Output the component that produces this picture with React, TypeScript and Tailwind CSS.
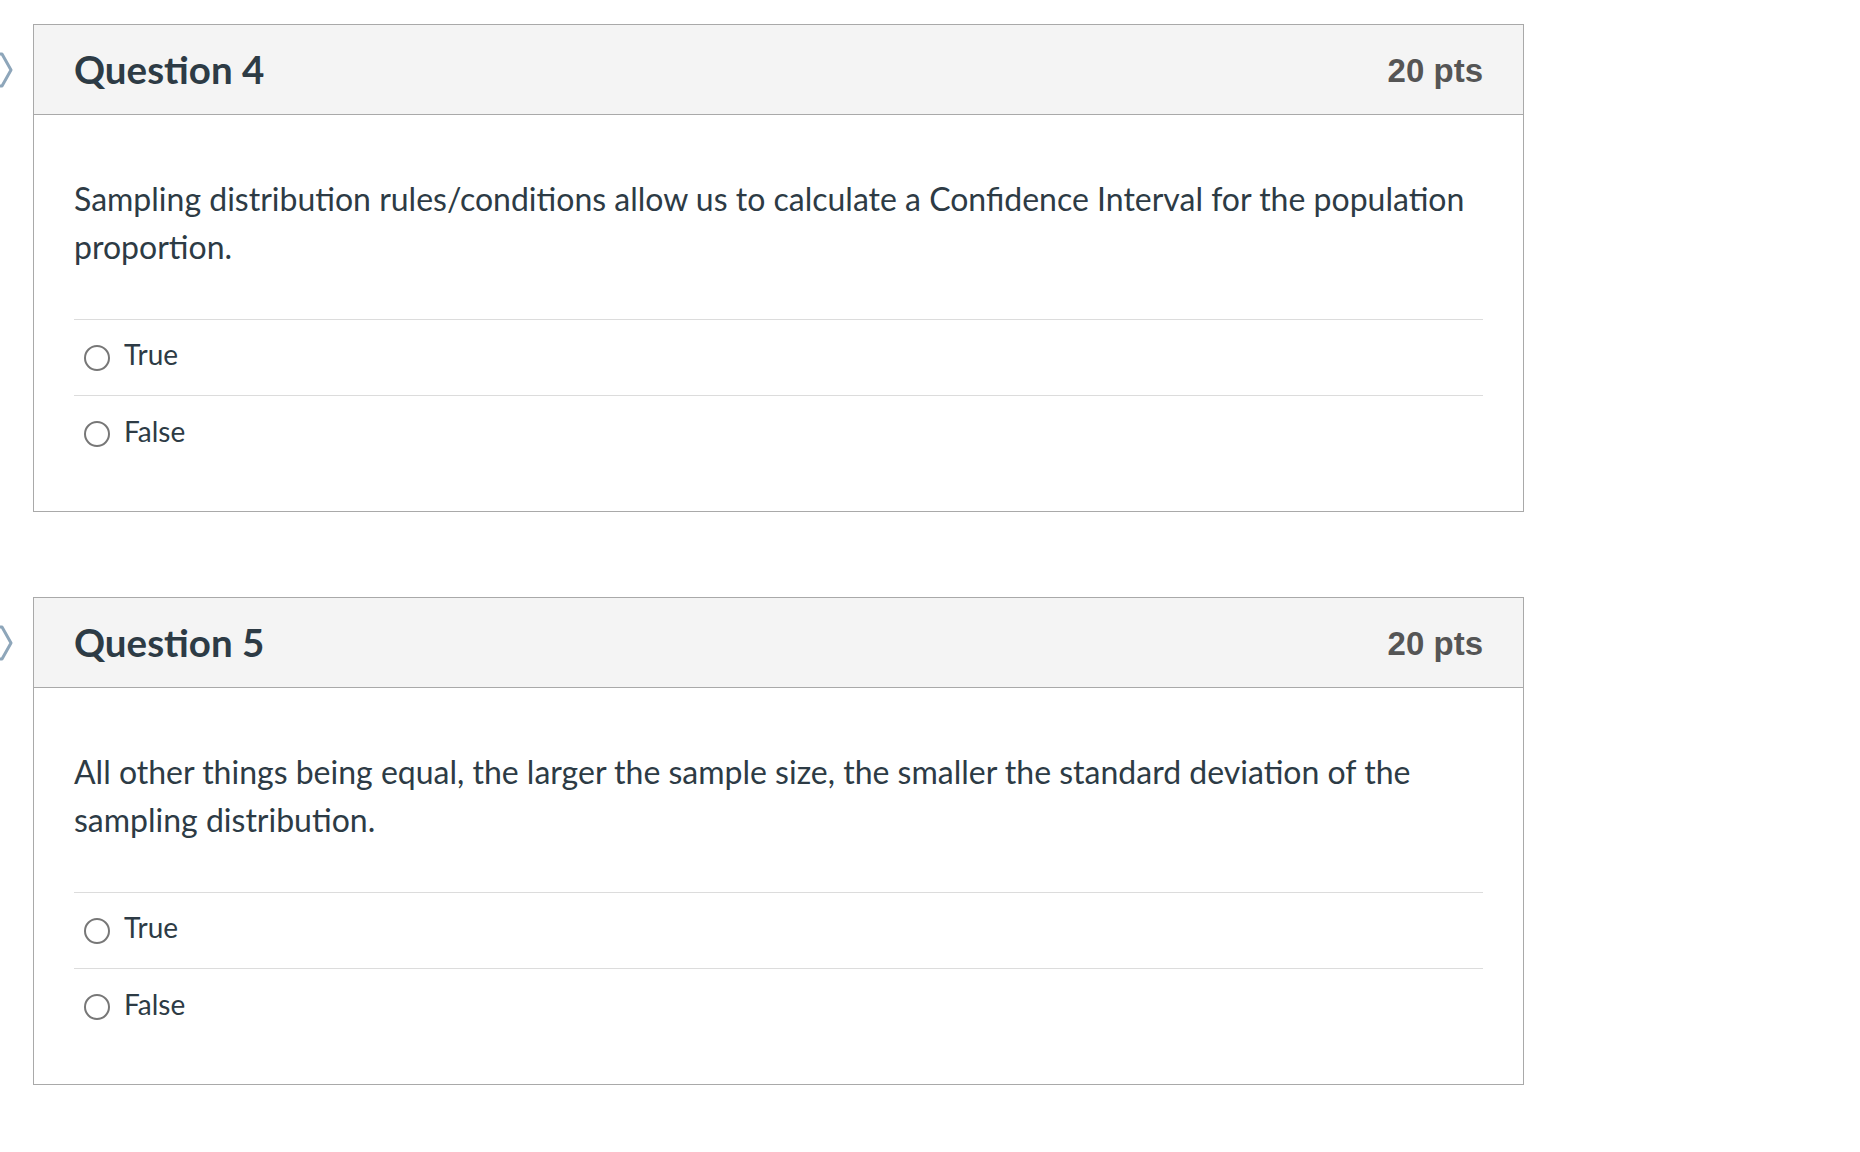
import React from 'react';

type Question = {
  number: number;
  points: number;
  text: string;
  answers: string[];
};

const questions: Question[] = [
  {
    number: 4,
    points: 20,
    text: 'Sampling distribution rules/conditions allow us to calculate a Confidence Interval for the population proportion.',
    answers: ['True', 'False'],
  },
  {
    number: 5,
    points: 20,
    text: 'All other things being equal, the larger the sample size, the smaller the standard deviation of the sampling distribution.',
    answers: ['True', 'False'],
  },
];

const FlagMark = () => (
  <svg width="16" height="36" viewBox="0 0 16 36" className="shrink-0">
    <path d="M-8 2 L4 2 L13 18 L4 34 L-8 34" fill="none" stroke="#8ea6ba" strokeWidth="3" strokeLinejoin="round" />
  </svg>
);

function QuestionCard({ q }: { q: Question }) {
  return (
    <div className="relative">
      {/* bookmark toggle, sits in the left gutter */}
      <div className="absolute -left-[35px] top-[28px]">
        <FlagMark />
      </div>
      <div className="border border-[#a9a9a9] bg-white">
        <div className="flex h-[90px] items-center justify-between border-b border-[#a9a9a9] bg-[#f4f4f4] px-[40px]">
          <h2 className="font-['Lato'] text-[38.5px] font-bold text-[#2d3b45]">Question {q.number}</h2>
          <span className="mt-[3px] font-['Liberation_Sans',Arial,sans-serif] text-[33px] font-bold text-[#555555]">
            {q.points} pts
          </span>
        </div>
        <div className="px-[40px] pt-[60px] pb-[39px]">
          <p className="font-['Lato'] text-[32px] leading-[48px] text-[#2d3b45] mb-[48px]">{q.text}</p>
          <div className="border-t border-[#dcdcdc]">
            {q.answers.map((a, i) => (
              <label
                key={a}
                className={`flex h-[76px] cursor-pointer items-center gap-[14px] pl-[10px] ${
                  i < q.answers.length - 1 ? 'border-b border-[#dcdcdc]' : ''
                }`}
              >
                <span className="h-[26px] w-[26px] rounded-full border-2 border-[#777777] bg-white" />
                <span className="mb-[7px] font-['Lato'] text-[28px] text-[#2d3b45]">{a}</span>
              </label>
            ))}
          </div>
        </div>
      </div>
    </div>
  );
}

export default function App() {
  return (
    <div className="min-h-screen bg-white font-['Lato',sans-serif]">
      <div className="ml-[33px] w-[1491px] pt-[24px] flex flex-col gap-[85px]">
        {questions.map((q) => (
          <QuestionCard key={q.number} q={q} />
        ))}
      </div>
    </div>
  );
}
